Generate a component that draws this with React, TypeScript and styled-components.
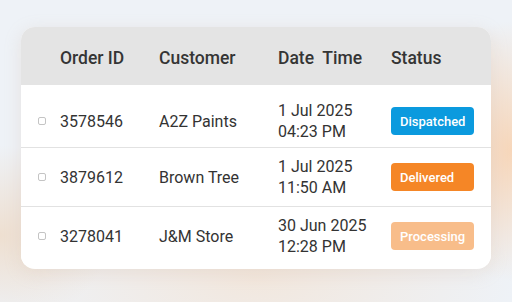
import React from "react";
import styled, { createGlobalStyle } from "styled-components";

const Global = createGlobalStyle`
  html, body { margin: 0; padding: 0; }
  body {
    width: 512px;
    height: 302px;
    overflow: hidden;
    font-family: Roboto, "Liberation Sans", sans-serif;
    background:
      radial-gradient(ellipse 90px 130px at 100% 50%, rgba(250, 205, 165, 0.75), rgba(250, 205, 165, 0) 100%),
      radial-gradient(ellipse 110px 90px at 0% 78%, rgba(238, 215, 192, 0.7), rgba(238, 215, 192, 0) 100%),
      radial-gradient(ellipse 260px 110px at 50% 92%, rgba(245, 222, 200, 0.55), rgba(245, 222, 200, 0) 100%),
      #eef2f7;
  }
`;

const Page = styled.div`
  padding: 27px 21px 0 21px;
  box-sizing: border-box;
  width: 512px;
  height: 302px;
`;

const Card = styled.div`
  width: 470px;
  background: #ffffff;
  border-radius: 14px;
  overflow: hidden;
  box-shadow: 0 4px 18px rgba(200, 160, 130, 0.18);
  padding-bottom: 4px;
`;

const Grid = styled.div`
  display: grid;
  grid-template-columns: 39px 99px 119px 113px 1fr;
  align-items: center;
  box-sizing: border-box;
  height: 58px;
`;

const HeaderRow = styled(Grid)`
  background: #e4e4e4;
  padding-top: 4px;
  margin-bottom: 4px;
  color: #353535;
  font-size: 17.5px;
  font-weight: 500;
`;

const BodyRow = styled(Grid)<{ $first?: boolean; $last?: boolean }>`
  background: #ffffff;
  padding-top: ${(p) => (p.$first ? "6px" : "0")};
  height: ${(p) => (p.$last ? "58px" : "59px")};
  border-bottom: ${(p) => (p.$last ? "none" : "1px solid #e2e2e2")};
  color: #333333;
  font-size: 16px;
  font-weight: 400;
`;

const Cell = styled.div`
  white-space: pre;
  line-height: 21px;
`;

const CheckCell = styled.div`
  display: flex;
  justify-content: flex-start;
  padding-left: 17px;
`;

const Check = styled.span`
  width: 8px;
  height: 8px;
  border: 1px solid #c4c4c4;
  border-radius: 2px;
  box-sizing: border-box;
  background: #fff;
`;

const Badge = styled.span<{ $color: string }>`
  display: flex;
  align-items: center;
  width: 83px;
  height: 28px;
  box-sizing: border-box;
  padding-left: 9px;
  border-radius: 4px;
  background: ${(p) => p.$color};
  color: #ffffff;
  font-size: 13px;
  font-weight: 500;
`;

const rows = [
  { id: "3578546", customer: "A2Z Paints", date: "1 Jul 2025", time: "04:23 PM", status: "Dispatched", color: "#0b9ade" },
  { id: "3879612", customer: "Brown Tree", date: "1 Jul 2025", time: "11:50 AM", status: "Delivered", color: "#f58626" },
  { id: "3278041", customer: "J&M Store", date: "30 Jun 2025", time: "12:28 PM", status: "Processing", color: "#f8bd8a" },
];

export default function App() {
  return (
    <>
      <Global />
      <Page>
        <Card>
          <HeaderRow>
            <Cell />
            <Cell>Order ID</Cell>
            <Cell>Customer</Cell>
            <Cell>{"Date  Time"}</Cell>
            <Cell>Status</Cell>
          </HeaderRow>
          {rows.map((r, i) => (
            <BodyRow key={r.id} $first={i === 0} $last={i === rows.length - 1}>
              <CheckCell>
                <Check />
              </CheckCell>
              <Cell>{r.id}</Cell>
              <Cell>{r.customer}</Cell>
              <Cell>
                {r.date}
                {"\n"}
                {r.time}
              </Cell>
              <Cell>
                <Badge $color={r.color}>{r.status}</Badge>
              </Cell>
            </BodyRow>
          ))}
        </Card>
      </Page>
    </>
  );
}
